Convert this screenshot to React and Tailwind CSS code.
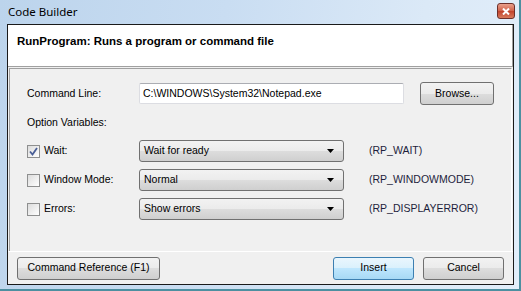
import React from 'react';

const font = { fontFamily: '"Liberation Sans", Arial, sans-serif' };

const Arrow = () => (
    <svg width="7" height="4" viewBox="0 0 7 4" className="shrink-0">
        <path d="M0 0 H7 L3.5 4 Z" fill="#000" />
    </svg>
);

const Combo = ({ value }) => (
    <div className="w-[205px] h-[22px] rounded-[3px] border border-[#707070] bg-[linear-gradient(#f2f2f2_0%,#ebebeb_50%,#dddddd_50%,#cfcfcf_100%)] flex items-center pl-[4px] pr-[9px] justify-between">
        <span>{value}</span>
        <Arrow />
    </div>
);

const Check = ({ checked }) => (
    <div className="w-[13px] h-[13px] border border-[#8e8f8f] bg-[linear-gradient(135deg,#dcdcdc,#ffffff)] flex items-center justify-center shrink-0">
        {checked && (
            <svg width="9" height="9" viewBox="0 0 9 9">
                <path d="M1 4.5 L3.5 7.5 L8 1" stroke="#4a5f97" strokeWidth="1.8" fill="none" />
            </svg>
        )}
    </div>
);

const Button = ({ children, w, focused }) => (
    <button
        className={
            focused
                ? "h-[23px] rounded-[3px] border border-[#3c7fb1] bg-[linear-gradient(#eaf6fd_0%,#d9f0fc_50%,#bee6fd_50%,#a7d9f5_100%)] flex items-center justify-center"
                : "h-[23px] rounded-[3px] border border-[#707070] bg-[linear-gradient(#f2f2f2_0%,#ebebeb_50%,#dddddd_50%,#cfcfcf_100%)] flex items-center justify-center"
        }
        style={{ width: w }}
    >
        {children}
    </button>
);

const OptionRow = ({ label, value, variable, checked }) => (
    <div className="flex items-center h-[22px]">
        <div className="w-[112px] flex items-center gap-[4px]">
            <Check checked={checked} />
            <span>{label}</span>
        </div>
        <Combo value={value} />
        <span className="ml-[25px] text-[#1e1e3c]">{variable}</span>
    </div>
);

export default function App() {
    return (
        <div className="w-[521px] h-[291px] flex flex-col bg-[linear-gradient(100deg,#bcd4ec_0%,#c9ddf2_40%,#dbe9f7_75%,#e2eefa_100%)] border-r-2 border-b-2 border-[#4d8fa0] text-[10.5px] text-black" style={font}>
            {/* Title bar */}
            <div className="h-[24px] flex items-center justify-between pl-[8px] pr-[4px] shrink-0">
                <span className="text-[11.5px] text-black" style={{ fontFamily: '"Noto Sans", sans-serif' }}>Code Builder</span>
                <div className="w-[18px] h-[16px] mb-[2px] rounded-[3px] border border-[#6d2f2a] bg-[linear-gradient(#e9a08c_0%,#d0614a_50%,#c0402a_50%,#d87a5c_100%)] flex items-center justify-center">
                    <svg width="8" height="7" viewBox="0 0 8 7">
                        <path d="M1 0.5 L7 6.5 M7 0.5 L1 6.5" stroke="#fff" strokeWidth="2" />
                    </svg>
                </div>
            </div>

            {/* Client area */}
            <div className="ml-[7px] mr-[5px] mb-[4px] flex-1 flex flex-col border border-[#1a1a1a] bg-[#f0f0f0]">
                <div className="h-[42px] shrink-0 bg-white border-b border-r border-[#a0a0a0] pl-[9px] pt-[8px]">
                    <span className="font-bold text-[11.5px]">RunProgram: Runs a program or command file</span>
                </div>

                <div className="h-[183px] shrink-0 ml-[1px] mr-[1px] mt-[1px] border-l border-t border-[#a0a0a0] border-r border-r-white flex flex-col pl-[17px] pt-[14px]">
                    <div className="flex items-center h-[21px]">
                        <span className="w-[112px]">Command Line:</span>
                        <div className="w-[265px] h-[21px] border border-[#dcdde2] border-t-[#abadb3] rounded-[2px] bg-white flex items-center pl-[3px]">
                            C:\WINDOWS\System32\Notepad.exe
                        </div>
                        <div className="ml-[16px]">
                            <Button w="74px">Browse...</Button>
                        </div>
                    </div>
                    <div className="mt-[12px] h-[13px] leading-[13px]">Option Variables:</div>
                    <div className="mt-[11px] flex flex-col gap-[7px]">
                        <OptionRow label="Wait:" value="Wait for ready" variable="(RP_WAIT)" checked />
                        <OptionRow label="Window Mode:" value="Normal" variable="(RP_WINDOWMODE)" />
                        <OptionRow label="Errors:" value="Show errors" variable="(RP_DISPLAYERROR)" />
                    </div>
                </div>

                <div className="flex-1 border-t border-white flex items-center px-[9px] justify-between">
                    <Button w="143px">Command Reference (F1)</Button>
                    <div className="flex gap-[9px]">
                        <Button w="81px" focused>Insert</Button>
                        <Button w="81px">Cancel</Button>
                    </div>
                </div>
            </div>
        </div>
    );
}
